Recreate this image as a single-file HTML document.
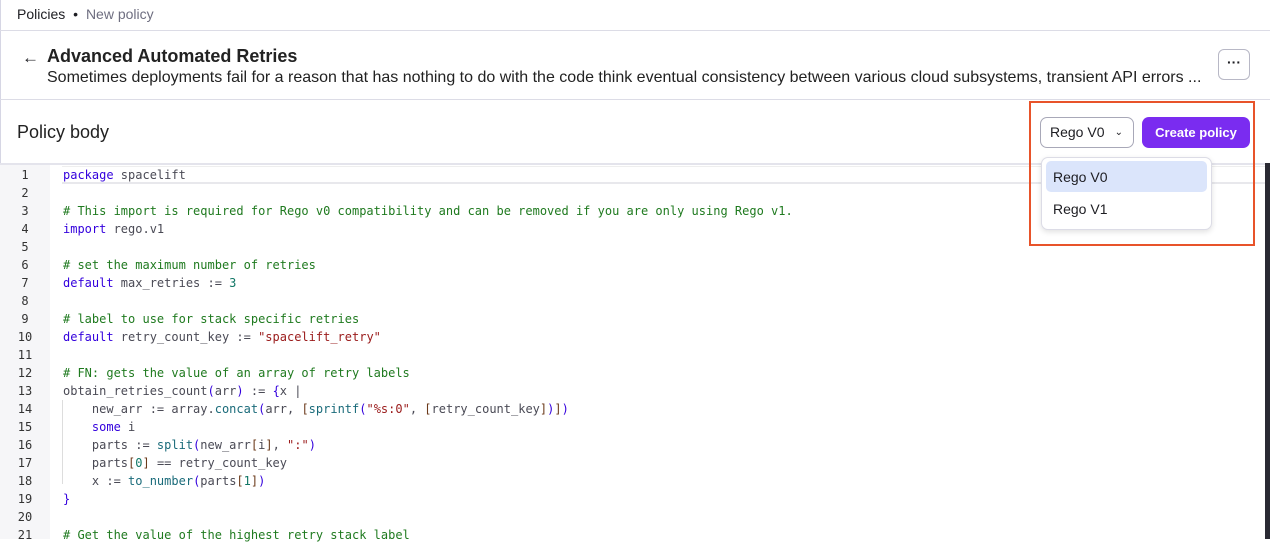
<!DOCTYPE html>
<html><head><style>
*{box-sizing:border-box;margin:0;padding:0}
body{width:1270px;height:539px;overflow:hidden;background:#fff;font-family:"Liberation Sans",sans-serif;color:#1d1d22;position:relative}
.abs{position:absolute}
.code{font-family:"DejaVu Sans Mono","Liberation Mono",monospace;font-size:12px;color:#4a4a55}
.ln{position:absolute;left:0;width:50px;text-align:center;font-family:"DejaVu Sans Mono",monospace;font-size:12px;color:#333}
.l{position:absolute;left:63px;white-space:pre}
.k{color:#3300dd}.c{color:#1f7a1f}.s{color:#9a1a1a}.n{color:#117766}.f{color:#1a6b7a}.b{color:#6b3a1a}
</style></head><body>
<div class="abs" style="left:0;top:0;width:1px;height:539px;background:#d6d6e4"></div>
<div class="abs" style="left:17px;top:6px;font-size:14px">Policies <span style="margin:0 4px">•</span> <span style="color:#6e6e80">New policy</span></div>
<div class="abs" style="left:0;top:30px;width:1270px;height:1px;background:#dcdce6"></div>
<div class="abs" style="left:22px;top:48px;font-size:17px">←</div>
<div class="abs" style="left:47px;top:46px;font-size:18px;font-weight:bold;color:#222">Advanced Automated Retries</div>
<div class="abs" style="left:47px;top:69px;font-size:16px;color:#222;white-space:nowrap">Sometimes deployments fail for a reason that has nothing to do with the code think eventual consistency between various cloud subsystems, transient API errors ...</div>
<div class="abs" style="left:1218px;top:49px;width:32px;height:31px;border:1px solid #b8b8c6;border-radius:6px;text-align:center;font-size:14px;font-weight:bold;line-height:24px">···</div>
<div class="abs" style="left:0;top:99px;width:1270px;height:1px;background:#dcdce6"></div>
<div class="abs" style="left:17px;top:122px;font-size:18px;color:#222">Policy body</div>
<div class="abs" style="left:0;top:163px;width:1265px;height:2px;background:#e4e4ec"></div>
<div class="abs" style="left:1265px;top:163px;width:5px;height:376px;background:#2a2a33"></div>
<div class="abs" style="left:0;top:165px;width:50px;height:374px;background:#f6f6f8"></div>
<div class="abs" style="left:62px;top:166px;width:1203px;height:18px;border-top:1px solid #eee;border-bottom:2px solid #e8e8ec"></div>
<div class="abs" style="left:62px;top:400px;width:1px;height:84px;background:#ddd"></div>
<div class="code">
<div class="ln" style="top:168px">1</div><div class="l" style="top:168px"><span class="k">package</span> spacelift</div>
<div class="ln" style="top:186px">2</div>
<div class="ln" style="top:204px">3</div><div class="l c" style="top:204px"># This import is required for Rego v0 compatibility and can be removed if you are only using Rego v1.</div>
<div class="ln" style="top:222px">4</div><div class="l" style="top:222px"><span class="k">import</span> rego.v1</div>
<div class="ln" style="top:240px">5</div>
<div class="ln" style="top:258px">6</div><div class="l c" style="top:258px"># set the maximum number of retries</div>
<div class="ln" style="top:276px">7</div><div class="l" style="top:276px"><span class="k">default</span> max_retries := <span class="n">3</span></div>
<div class="ln" style="top:294px">8</div>
<div class="ln" style="top:312px">9</div><div class="l c" style="top:312px"># label to use for stack specific retries</div>
<div class="ln" style="top:330px">10</div><div class="l" style="top:330px"><span class="k">default</span> retry_count_key := <span class="s">"spacelift_retry"</span></div>
<div class="ln" style="top:348px">11</div>
<div class="ln" style="top:366px">12</div><div class="l c" style="top:366px"># FN: gets the value of an array of retry labels</div>
<div class="ln" style="top:384px">13</div><div class="l" style="top:384px">obtain_retries_count<span class="k">(</span>arr<span class="k">)</span> := <span class="k">{</span>x |</div>
<div class="ln" style="top:402px">14</div><div class="l" style="top:402px">    new_arr := array.<span class="f">concat</span><span class="k">(</span>arr, <span class="b">[</span><span class="f">sprintf</span><span class="k">(</span><span class="s">"%s:0"</span>, <span class="b">[</span>retry_count_key<span class="b">]</span><span class="k">)</span><span class="b">]</span><span class="k">)</span></div>
<div class="ln" style="top:420px">15</div><div class="l" style="top:420px">    <span class="k">some</span> i</div>
<div class="ln" style="top:438px">16</div><div class="l" style="top:438px">    parts := <span class="f">split</span><span class="k">(</span>new_arr<span class="b">[</span>i<span class="b">]</span>, <span class="s">":"</span><span class="k">)</span></div>
<div class="ln" style="top:456px">17</div><div class="l" style="top:456px">    parts<span class="b">[</span><span class="n">0</span><span class="b">]</span> == retry_count_key</div>
<div class="ln" style="top:474px">18</div><div class="l" style="top:474px">    x := <span class="f">to_number</span><span class="k">(</span>parts<span class="b">[</span><span class="n">1</span><span class="b">]</span><span class="k">)</span></div>
<div class="ln" style="top:492px">19</div><div class="l" style="top:492px"><span class="k">}</span></div>
<div class="ln" style="top:510px">20</div>
<div class="ln" style="top:528px">21</div><div class="l c" style="top:528px"># Get the value of the highest retry stack label</div>
</div>
<div class="abs" style="left:1029px;top:101px;width:226px;height:145px;border:2px solid #e8532a"></div>
<div class="abs" style="left:1040px;top:117px;width:94px;height:31px;border:1px solid #a8a8b8;border-radius:7px;background:#fff;font-size:14px;line-height:29px;padding-left:9px">Rego V0<span style="position:absolute;right:10px;top:0;font-size:10px">&#8964;</span></div>
<div class="abs" style="left:1142px;top:117px;width:108px;height:31px;border-radius:7px;background:#7a2cf0;color:#fff;font-size:13px;font-weight:bold;line-height:31px;text-align:center">Create policy</div>
<div class="abs" style="left:1041px;top:157px;width:171px;height:73px;border:1px solid #dcdce6;border-radius:7px;background:#fff;box-shadow:0 2px 6px rgba(0,0,0,.12)"></div>
<div class="abs" style="left:1046px;top:161px;width:161px;height:31px;border-radius:5px;background:#dbe5fb"></div>
<div class="abs" style="left:1053px;top:169px;font-size:14px">Rego V0</div>
<div class="abs" style="left:1053px;top:201px;font-size:14px">Rego V1</div>
</body></html>
